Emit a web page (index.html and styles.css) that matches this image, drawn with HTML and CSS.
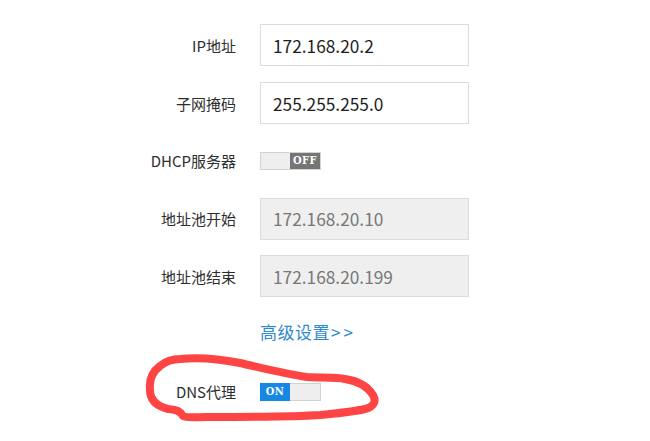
FILE: index.html
```html
<!DOCTYPE html>
<html lang="zh-CN">
<head>
<meta charset="utf-8">
<title>LAN设置</title>
<link rel="stylesheet" href="styles.css">
</head>
<body>
<div class="page">
  <form class="form">
    <label class="lbl">IP地址</label>
    <div class="field"><input class="inp" type="text" value="172.168.20.2"></div>

    <label class="lbl">子网掩码</label>
    <div class="field"><input class="inp" type="text" value="255.255.255.0"></div>

    <label class="lbl">DHCP服务器</label>
    <div class="field">
      <span class="toggle off"><span class="track"></span><span class="knob">OFF</span></span>
    </div>

    <label class="lbl">地址池开始</label>
    <div class="field"><input class="inp" type="text" value="172.168.20.10" disabled></div>

    <label class="lbl">地址池结束</label>
    <div class="field"><input class="inp" type="text" value="172.168.20.199" disabled></div>

    <span class="lbl"></span>
    <div class="field field-link"><a class="adv" href="#">高级设置<span class="arr">&gt;&gt;</span></a></div>

    <label class="lbl">DNS代理</label>
    <div class="field">
      <span class="toggle on"><span class="knob">ON</span><span class="track"></span></span>
    </div>
  </form>

  <svg class="mark" width="650" height="441" viewBox="0 0 650 441">
    <path d="M160 366 C166 361 172 359 180 359 C200 357 220 359 240 363 C262 368 285 374 307 377 C322 378 334 377 345 379 C358 381 368 387 373 395 C377 402 373 407 365 409 C352 412 340 413 320 415 C290 417 250 417 207 417 C195 417 186 418 183 416 C181 412 178 410 168 409 C156 406 150 400 150 390 C149 381 152 372 160 366 Z" />
  </svg>
</div>
</body>
</html>
```

FILE: styles.css
```css
html, body {
  margin: 0;
  padding: 0;
  background: #ffffff;
}

.page {
  position: relative;
  width: 650px;
  height: 441px;
  overflow: hidden;
  font-family: "Noto Sans CJK SC", "Noto Sans", sans-serif;
}

.form {
  display: grid;
  grid-template-columns: 236px 210px;
  grid-auto-rows: 57.7px;
  column-gap: 24px;
  padding-top: 16.6px;
  margin: 0;
}

.lbl {
  display: flex;
  align-items: center;
  justify-content: flex-end;
  font-size: 15px;
  color: #2e2e2e;
  white-space: nowrap;
}

.field {
  display: flex;
  align-items: center;
}

.field-link {
  padding-bottom: 5px;
}

.inp {
  box-sizing: border-box;
  width: 209px;
  height: 42px;
  margin: 0;
  border: 1px solid #dcdcdc;
  background: #ffffff;
  padding: 0 0 0 12px;
  font-family: "Noto Sans CJK SC", "Noto Sans", sans-serif;
  font-size: 17.3px;
  color: #1e1e1e;
  outline: none;
}

.inp:disabled {
  background: #efefef;
  color: #777777;
  border-color: #dcdcdc;
  -webkit-text-fill-color: #777777;
  opacity: 1;
}

.toggle {
  box-sizing: border-box;
  display: flex;
  width: 61px;
  height: 18px;
  border: 1px solid #d2d2d2;
  background: #eeeeee;
}

.toggle .track {
  flex: 1;
}

.toggle .knob {
  width: 30px;
  display: flex;
  align-items: center;
  justify-content: center;
  font-family: "DejaVu Serif Condensed", "DejaVu Serif", "Liberation Serif", serif;
  font-size: 11px;
  font-weight: bold;
  color: #ffffff;
  letter-spacing: 0.4px;
}

.toggle.off .knob {
  background: #757575;
}

.toggle.on .knob {
  background: #1787e4;
  margin: -1px 0 -1px -1px;
  height: 18px;
}

.adv {
  font-size: 17px;
  color: #2f8bd0;
  text-decoration: none;
  letter-spacing: 0.5px;
}

.adv .arr {
  letter-spacing: 3px;
  margin-left: 1px;
}

.mark {
  position: absolute;
  left: 0;
  top: 0;
  pointer-events: none;
}

.mark path {
  fill: none;
  stroke: #ff4444;
  stroke-width: 8;
  stroke-linecap: round;
  stroke-linejoin: round;
}
```
